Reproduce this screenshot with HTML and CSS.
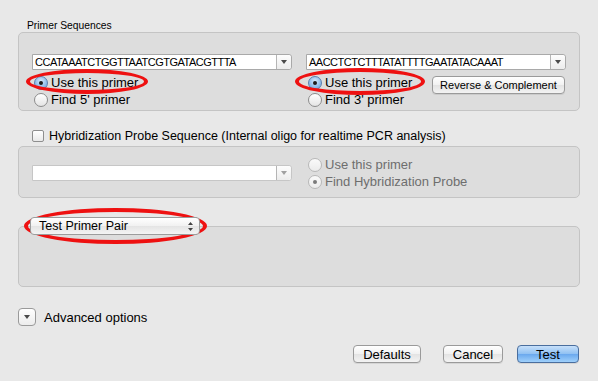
FILE: index.html
```html
<!DOCTYPE html>
<html lang="en">
<head>
  <meta charset="UTF-8" />
  <title>Primer Sequences</title>
  <link rel="stylesheet" href="styles.css">
</head>
<body>
  <div class="window">
    <div class="group-title">Primer Sequences</div>
    <div class="group primer-group">
      <div class="primer-col">
        <div class="combo">
          <div class="combo-text">CCATAAATCTGGTTAATCGTGATACGTTTA</div>
          <div class="combo-arrow"><span class="tri"></span></div>
        </div>
        <div class="radio-list">
          <label class="radio-row"><span class="radio checked"></span>Use this primer</label>
          <label class="radio-row"><span class="radio"></span>Find 5' primer</label>
        </div>
      </div>
      <div class="primer-col">
        <div class="combo">
          <div class="combo-text">AACCTCTCTTTATATTTTGAATATACAAAT</div>
          <div class="combo-arrow"><span class="tri"></span></div>
        </div>
        <div class="radio-line">
          <div class="radio-list">
            <label class="radio-row"><span class="radio checked"></span>Use this primer</label>
            <label class="radio-row"><span class="radio"></span>Find 3' primer</label>
          </div>
          <button class="btn rev-btn">Reverse &amp; Complement</button>
        </div>
      </div>
    </div>

    <label class="check-row"><span class="checkbox"></span>Hybridization Probe Sequence (Internal oligo for realtime PCR analysis)</label>
    <div class="group probe-group">
      <div class="combo disabled">
        <div class="combo-text"></div>
        <div class="combo-arrow"><span class="tri"></span></div>
      </div>
      <div class="radio-list disabled">
        <label class="radio-row"><span class="radio"></span>Use this primer</label>
        <label class="radio-row"><span class="radio checked-off"></span>Find Hybridization Probe</label>
      </div>
    </div>

    <div class="popup">
      <span>Test Primer Pair</span>
      <svg class="updown" width="7" height="11" viewBox="0 0 7 11">
        <path d="M3.5 1 L6 4 L1 4 Z M1 7 L6 7 L3.5 10 Z" fill="#444"/>
      </svg>
    </div>
    <div class="group task-group"></div>

    <div class="advanced-row">
      <span class="disclosure"><span class="tri"></span></span>
      Advanced options
    </div>

    <div class="actions">
      <button class="btn">Defaults</button>
      <button class="btn cancel-btn">Cancel</button>
      <button class="btn default-btn">Test</button>
    </div>

    <!-- red annotation marks -->
    <div class="mark mark-left"></div>
    <div class="mark mark-right"></div>
    <div class="mark mark-popup"></div>
  </div>
</body>
</html>
```

FILE: styles.css
```css
body {
  margin: 0;
  background-color: #e8e8e8;
  font-family: "Liberation Sans", Arial, sans-serif;
  color: #000;
}

.window {
  position: relative;
  width: 598px;
  height: 381px;
  box-sizing: border-box;
  padding: 19px 18px 0 18px;
  overflow: hidden;
}

.group-title {
  font-size: 10.3px;
  line-height: 14px;
  margin-left: 9px;
  margin-bottom: -1px;
}

.group {
  background-color: #dddddd;
  border: 1px solid #c4c4c4;
  border-radius: 5px;
  box-sizing: border-box;
  width: 562px;
}

/* Primer box */
.primer-group {
  height: 79px;
  padding: 21px 13px 0 13px;
  display: flex;
  gap: 14px;
}
.primer-col {
  width: 260px;
}

.combo {
  display: flex;
  height: 16px;
  border: 1px solid #a9a9a9;
  border-radius: 0 3px 3px 0;
  box-sizing: border-box;
  background: #fff;
}
.combo-text {
  flex-grow: 1;
  font-size: 11px;
  letter-spacing: -0.5px;
  line-height: 14px;
  padding-left: 2px;
  overflow: hidden;
  white-space: nowrap;
}
.combo-arrow {
  width: 14px;
  border-left: 1px solid #b5b5b5;
  background: linear-gradient(#fdfdfd, #ececec);
  border-radius: 0 3px 3px 0;
  display: flex;
  align-items: center;
  justify-content: center;
}
.tri {
  width: 0;
  height: 0;
  border-left: 3px solid transparent;
  border-right: 3px solid transparent;
  border-top: 4px solid #4a4a4a;
}
.combo.disabled {
  border-color: #c6c6c6;
}
.combo.disabled .tri {
  border-top-color: #a0a0a0;
}

.radio-list {
  margin-top: 4px;
  display: flex;
  flex-direction: column;
}
.radio-row {
  display: flex;
  align-items: center;
  height: 17px;
  font-size: 13px;
  padding-left: 2px;
  gap: 3px;
}
.radio {
  width: 14px;
  height: 14px;
  box-sizing: border-box;
  border-radius: 50%;
  border: 1px solid #8c8c8c;
  background: linear-gradient(#ffffff, #e4e4e4);
  display: flex;
  align-items: center;
  justify-content: center;
}
.radio.checked {
  border-color: #5a7fae;
  background: radial-gradient(circle at 50% 35%, #d7ebfc, #7fb2e6 70%, #5d93d1);
}
.radio.checked::after,
.radio.checked-off::after {
  content: "";
  width: 4px;
  height: 4px;
  border-radius: 50%;
  background: #1c1c1c;
}
.radio-list.disabled .radio-row {
  color: #6e6e6e;
}
.radio-list.disabled .radio {
  border-color: #b8b8b8;
  background: linear-gradient(#fafafa, #ebebeb);
}
.radio-list.disabled .radio.checked-off::after {
  background: #7a7a7a;
}

.radio-line {
  display: flex;
  justify-content: space-between;
}

.btn {
  font-family: "Liberation Sans", Arial, sans-serif;
  font-size: 13px;
  height: 18px;
  padding: 0;
  border: 1px solid #9a9a9a;
  border-radius: 4px;
  background: linear-gradient(#ffffff, #f1f1f1 50%, #e3e3e3 51%, #f3f3f3);
  color: #000;
  box-shadow: 0 1px 0 rgba(0, 0, 0, 0.08);
}
.rev-btn {
  width: 133px;
  font-size: 11px;
  margin-top: 6px;
  margin-right: 1px;
}

/* Hybridization probe */
.check-row {
  display: flex;
  align-items: center;
  gap: 5px;
  height: 17px;
  margin-top: 16px;
  padding-left: 14px;
  font-size: 12.5px;
}
.checkbox {
  width: 12px;
  height: 12px;
  box-sizing: border-box;
  border: 1px solid #8e8e8e;
  border-radius: 2px;
  background: linear-gradient(#ffffff, #e9e9e9);
}
.probe-group {
  margin-top: 2px;
  height: 52px;
  padding: 0 13px;
  display: flex;
  gap: 14px;
}
.probe-group .combo {
  width: 260px;
  margin-top: 18px;
}
.probe-group .radio-list {
  margin-top: 9px;
}

/* Task popup */
.popup {
  position: relative;
  z-index: 1;
  margin: 19px 0 -9px 12px;
  width: 170px;
  height: 18px;
  box-sizing: border-box;
  border: 1px solid #9c9c9c;
  border-radius: 4px;
  background: linear-gradient(#ffffff, #f1f1f1 50%, #e4e4e4 51%, #f4f4f4);
  display: flex;
  align-items: center;
  justify-content: space-between;
  padding: 0 5px 0 8px;
  font-size: 12.5px;
}
.task-group {
  height: 61px;
}

/* Advanced */
.advanced-row {
  display: flex;
  align-items: center;
  gap: 8px;
  height: 18px;
  margin-top: 21px;
  font-size: 13px;
}
.disclosure {
  width: 18px;
  height: 18px;
  box-sizing: border-box;
  border: 1px solid #9a9a9a;
  border-radius: 4px;
  background: linear-gradient(#ffffff, #ececec);
  display: flex;
  align-items: center;
  justify-content: center;
}

/* Bottom buttons */
.actions {
  display: flex;
  justify-content: flex-end;
  margin-top: 19px;
  margin-right: 1px;
}
.actions .btn {
  width: 68px;
}
.actions .cancel-btn {
  width: 60px;
  margin-left: 22px;
}
.actions .default-btn {
  width: 62px;
  margin-left: 14px;
  border-color: #4a6e9e;
  background: linear-gradient(#c7e0fa, #8fc0f2 50%, #6aa8ee 51%, #9fd0fb);
}

/* Red annotation marks */
.mark {
  position: absolute;
  border: 4px solid #ee1111;
  border-radius: 50%;
  box-sizing: border-box;
}
.mark-left {
  left: 26px;
  top: 69px;
  width: 122px;
  height: 25px;
}
.mark-right {
  left: 295px;
  top: 68px;
  width: 130px;
  height: 27px;
}
.mark-popup {
  left: 24px;
  top: 208px;
  width: 183px;
  height: 36px;
}
```
